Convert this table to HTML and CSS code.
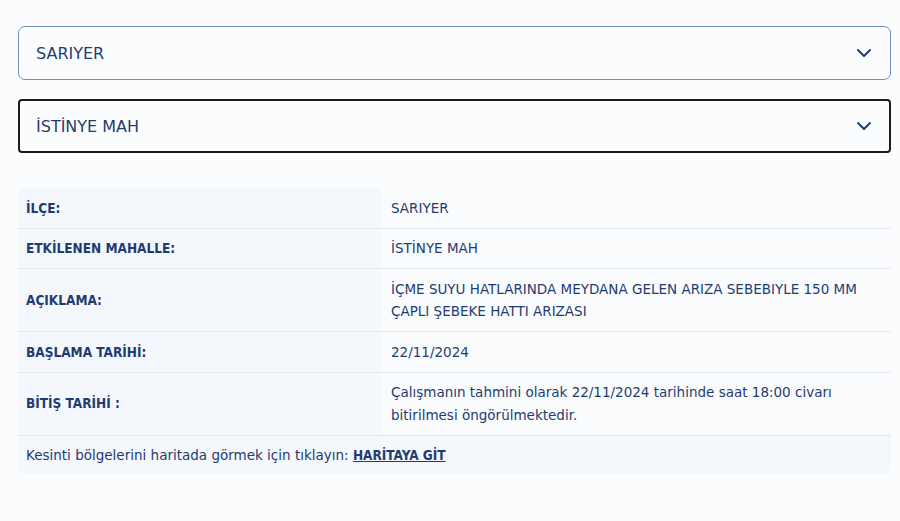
FILE: index.html
```html
<!DOCTYPE html>
<html>
<head>
  <title>Kesinti Bilgisi</title>
  <link rel="stylesheet" href="styles.css">
</head>
<body>

  <div class="select-box">
    <span>SARIYER</span>
    <svg class="chevron" width="16" height="10" viewBox="0 0 16 10"><path d="M2 2 L8 8 L14 2" fill="none" stroke="#1d3f78" stroke-width="2" stroke-linecap="round" stroke-linejoin="round"/></svg>
  </div>

  <div class="select-box active">
    <span>İSTİNYE MAH</span>
    <svg class="chevron" width="16" height="10" viewBox="0 0 16 10"><path d="M2 2 L8 8 L14 2" fill="none" stroke="#1d3f78" stroke-width="2" stroke-linecap="round" stroke-linejoin="round"/></svg>
  </div>

  <table class="info-table">
    <tbody>
      <tr>
        <th>İLÇE:</th>
        <td>SARIYER</td>
      </tr>
      <tr>
        <th>ETKİLENEN MAHALLE:</th>
        <td>İSTİNYE MAH</td>
      </tr>
      <tr>
        <th>AÇIKLAMA:</th>
        <td>İÇME SUYU HATLARINDA MEYDANA GELEN ARIZA SEBEBIYLE 150 MM<br>ÇAPLI ŞEBEKE HATTI ARIZASI</td>
      </tr>
      <tr>
        <th>BAŞLAMA TARİHİ:</th>
        <td>22/11/2024</td>
      </tr>
      <tr>
        <th>BİTİŞ TARİHİ :</th>
        <td>Çalışmanın tahmini olarak 22/11/2024 tarihinde saat 18:00 civarı<br>bitirilmesi öngörülmektedir.</td>
      </tr>
      <tr class="map-row">
        <td colspan="2">Kesinti bölgelerini haritada görmek için tıklayın: <a href="#">HARİTAYA GİT</a></td>
      </tr>
    </tbody>
  </table>

</body>
</html>
```

FILE: styles.css
```css
body {
  margin: 0;
  padding: 26px 9px 0 18px;
  background-color: #fbfcfe;
  font-family: "DejaVu Sans", sans-serif;
  color: #1f3c72;
}

.select-box {
  display: flex;
  align-items: center;
  justify-content: space-between;
  height: 52px;
  padding: 0 18px 0 17px;
  border: 1px solid #6f8dbf;
  border-radius: 7px;
  font-size: 16px;
  margin-bottom: 19px;
}

.select-box.active {
  height: 50px;
  border: 2px solid #1c1c1c;
  border-radius: 4px;
  padding-left: 16px;
  padding-right: 17px;
}

.info-table {
  width: 100%;
  margin-top: 35px;
  border-collapse: separate;
  border-spacing: 0;
  background-color: #f4f7fb;
  border-radius: 8px;
  font-size: 13.5px;
}

.info-table th,
.info-table td {
  padding: 8.5px 8px;
  line-height: 22.5px;
  text-align: left;
  border-bottom: 1px solid #e4e7ec;
}

.info-table th {
  width: 347px;
  font-family: "DejaVu Sans Condensed", "DejaVu Sans", sans-serif;
  font-size: 13.5px;
  font-weight: bold;
}

.info-table td {
  padding-left: 10px;
  background-color: #fafbfd;
}

.info-table tr:first-child th {
  border-top-left-radius: 8px;
}

.info-table tr:first-child td {
  border-top-right-radius: 8px;
}

.info-table .map-row td {
  background-color: #f4f7fb;
  padding: 8px 8px;
  line-height: 22px;
  border-bottom: none;
  border-radius: 0 0 8px 8px;
}

.map-row a {
  color: #1f3c72;
  font-family: "DejaVu Sans Condensed", "DejaVu Sans", sans-serif;
  font-size: 13.5px;
  font-weight: bold;
}
```
